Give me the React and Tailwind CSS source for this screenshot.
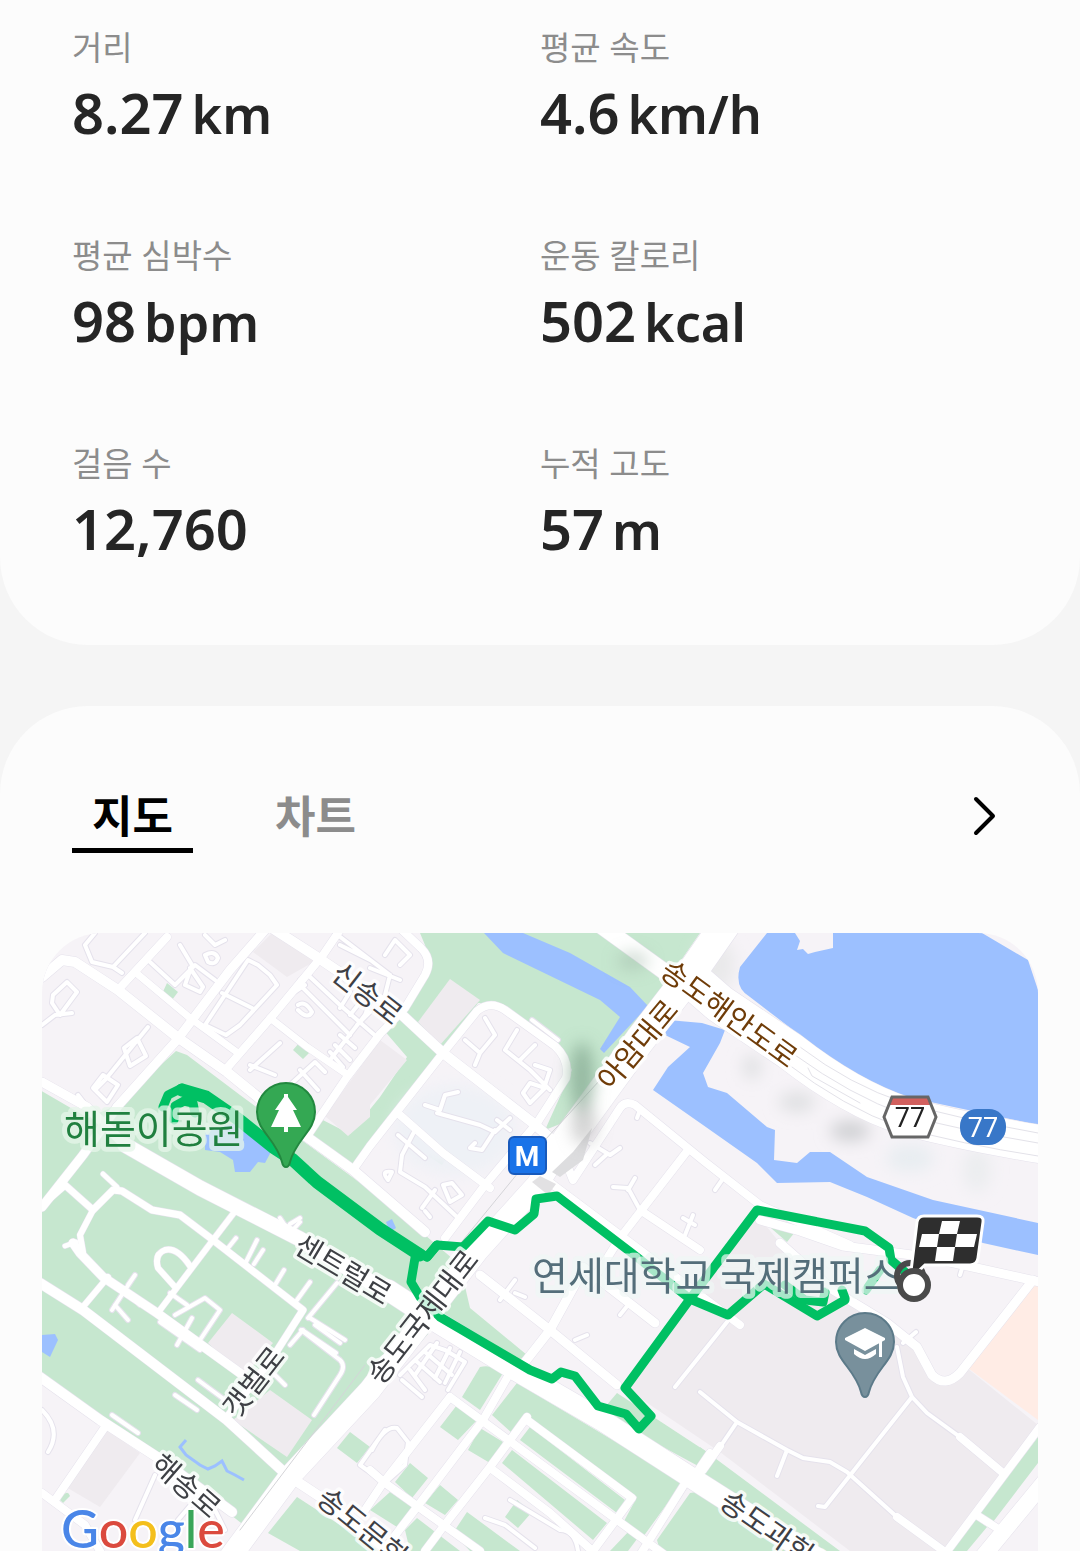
const stats = [
  { label: "거리", value: "8.27", unit: "km" },
  { label: "평균 속도", value: "4.6", unit: "km/h" },
  { label: "평균 심박수", value: "98", unit: "bpm" },
  { label: "운동 칼로리", value: "502", unit: "kcal" },
  { label: "걸음 수", value: "12,760" },
  { label: "누적 고도", value: "57", unit: "m" },
];

// parks and lawns
const greens = [
  "M40 1090L88 1118L117 1105L176 1051L187 1055L240 1095L370 1190L425 1235L460 1265L470 1308L527 1355L512 1364L440 1320L380 1390L288 1474L250 1530L156 1456L40 1378Z",
  "M317 1117L350 1134L380 1097L407 1057L382 1028L400 1010L432 962L420 933H700L664 985L600 1070L570 1120L545 1130L572 1070L560 1045L500 1003L478 1003L443 1053L352 1166L310 1134Z",
  "M161 996L167 983L178 992L172 1000Z M293 1050L299 1043L310 1052L303 1059Z M428 1156L435 1147L447 1157L442 1165Z",
  "M617 1393L707 1452L700 1467L600 1413Z",
  "M700 1447L840 1551H810L703 1473Z M700 1487L810 1551H700Z",
  "M1038 1437L980 1513L993 1522L1038 1463Z M973 1517L987 1527L967 1551H950Z",
  "M480 1367Q492 1364 503 1373L480 1410L462 1397Z",
  "M517 1383L683 1482L643 1537L623 1523L637 1497L527 1417L512 1433L492 1415Z",
  "M530 1427L625 1500L617 1513L520 1440Z M512 1450L607 1523L593 1540L502 1463Z",
  "M457 1405L477 1420L458 1440L440 1427Z M480 1428L503 1442L490 1463L468 1450Z",
  "M410 1463L428 1478L412 1498L395 1482Z M440 1485L458 1500L445 1515L425 1503Z",
  "M390 1492L412 1507L397 1527L370 1510Z M417 1518L460 1551H410L405 1530Z M467 1512L520 1551H470L453 1533Z",
  "M517 1500L532 1512L518 1528L505 1517Z M630 1530L640 1535L628 1551H610Z M710 1490L690 1493L657 1540L660 1551H710Z",
  "M350 1432L370 1447L357 1463L337 1448Z M297 1497L380 1551H300L268 1533Z",
  "M60 1500Q67 1488 70 1496L63 1503Z",
];

// campus and building plots
const plots = [
  "M757 1215L690 1300L625 1388L720 1452L850 1551H945L1038 1425L967 1368L947 1382L933 1376L917 1347L833 1290L780 1243Z",
  "M232 1313L273 1343L243 1377L208 1343Z M270 1390L312 1420L287 1457L233 1420Z",
  "M107 1430L140 1453L100 1507L66 1487Z",
  "M253 952L272 933L317 960L287 977Z M380 1040L407 1060L370 1105V1117L348 1136L325 1116Z",
  "M450 979L480 1000L440 1045L418 1022Z",
];

const water = [
  "M484 933H523L570 953L630 987L648 1006L604 1053L600 1049L620 1017L600 1000L503 953Z",
  "M767 933L740 967Q734 988 750 997L810 1043Q850 1079 907 1097L1038 1125V990L1028 960L982 933H833L833 948L815 952L808 954L803 949L797 950L800 941L795 933Z",
  "M668 1020L702 1023L725 1030L720 1043L703 1073L708 1087L727 1093L767 1127L775 1130L774 1160L797 1163L810 1152H830L867 1177L933 1200L1038 1223V1255L983 1243L913 1218L867 1197L830 1182L777 1183L757 1163L703 1125L653 1090L668 1067L690 1047L665 1035Z",
  "M205 1132L245 1120L273 1148L265 1163L258 1162L250 1172H235L233 1160L220 1152L205 1150Z",
  "M42 1335L55 1334L58 1340L50 1357L42 1352Z",
  "M386 1222L392 1219L396 1228L390 1232Z",
];

const avenues = [
  // coastal road
  { w: 38, d: "M690 978L720 1004L790 1051Q850 1098 905 1116Q960 1131 1045 1145" },
  { w: 30, d: "M725 925L690 975L640 1040L600 1095L560 1150" },
  { w: 22, d: "M560 1148L537 1185L478 1250L370 1390L290 1476L228 1560" },
  { w: 16, d: "M600 925L665 972L690 990" },
  { w: 21, d: "M388 1290L437 1322L517 1371L603 1421L690 1477L820 1560" },
  { w: 15, d: "M125 1145L200 1188L300 1239L392 1295" },
  { w: 16, d: "M1050 1475L980 1560" },
];

const streets = [
  { w: 10, d: "M42 977L62 960L75 962L118 990L177 1037L227 1072L307 1137L353 1170L425 1232" },
  { w: 10, d: "M272 928L317 957L400 1013L443 1053L533 1123L557 1144" },
  { w: 9, d: "M42 1082L87 1107L125 1145" },
  { w: 8, d: "M118 990L167 937 M227 1068L275 1013L323 955L340 930" },
  { w: 9, d: "M117 1107L177 1040L230 970L265 930" },
  { w: 9, d: "M117 1107L83 1155L42 1207" },
  { w: 8, d: "M310 1132L347 1077L380 1034L405 1008L425 975Q433 960 421 948L402 930" },
  { w: 8, d: "M353 1170L370 1146L443 1053L477 1011Q490 1000 505 1010L555 1046Q570 1060 566 1078L537 1123" },
  { w: 7, d: "M135 972L190 1018L238 1053 M270 1018L307 1047L345 1073" },
  { w: 8, d: "M400 1115L443 1153L490 1188 M537 1123L485 1185L445 1238" },
  { w: 8, d: "M557 1140L573 1180L620 1108Q625 1100 635 1105L705 1162L760 1205L850 1245" },
  { w: 8, d: "M540 1175L640 1250L740 1325 M688 1150L620 1238L590 1285 M643 1212L700 1250" },
  { w: 9, d: "M480 1275L550 1330L617 1385 M583 1270L550 1330L525 1362 M583 1267L655 1323" },
  { w: 9, d: "M760 1220L800 1231L843 1246L927 1257L1040 1282" },
  { w: 9, d: "M780 1243L833 1290L887 1323L917 1347L932 1375Q945 1388 960 1373L1033 1280" },
  { w: 8, d: "M1040 1427L945 1554 M897 1517L945 1552 M960 1437L1003 1473 M703 1470L720 1446 M975 1514L997 1528" },
  { w: 10, d: "M40 1283L83 1310L227 1420L287 1475L325 1500L400 1560" },
  { w: 9, d: "M73 1243L80 1253L103 1277L157 1313L240 1373" },
  { w: 10, d: "M40 1377L100 1420L157 1457L232 1512" },
  { w: 7, d: "M42 1205L65 1185L93 1210L113 1190L122 1191L152 1210L180 1215L213 1240L303 1310L273 1357L227 1417" },
  { w: 6, d: "M93 1210L80 1235L83 1252 M236 1210L213 1240L160 1310 M108 1277L82 1308" },
  { w: 5, d: "M103 1174L117 1187 M65 1246L76 1242" },
  { w: 6, d: "M175 1287L158 1268Q154 1254 165 1250Q177 1247 190 1266" },
  { w: 8, d: "M105 1427L55 1500 M42 1493L85 1525L100 1551" },
  { w: 8, d: "M370 1470L385 1483L480 1551 M450 1397L617 1520L665 1555" },
  { w: 8, d: "M507 1378L483 1420L417 1507L380 1555 M450 1397L383 1483L365 1510" },
  { w: 8, d: "M527 1417L490 1467L443 1527L425 1551 M493 1470L550 1513L597 1555 M527 1420L632 1498L590 1555" },
  { w: 8, d: "M687 1480L640 1555 M710 1453L695 1475" },
];

const lanes = [
  "M85 945L95 933 M85 945L92 962L113 967L145 933 M113 967L122 973",
  "M150 962L175 985L195 965L215 980 M180 945L192 965L185 985L200 992L203 987L190 968 M205 935L215 945L225 940 M205 955Q215 950 218 958Q215 966 208 962Z",
  "M53 995L67 982L77 992L60 1015L52 1003Z M42 1025L55 1015L72 1013",
  "M148 1027L105 1080L95 1090 M124 1048L137 1038L146 1056L130 1066Z M93 1088L103 1075L118 1085L107 1102Z M78 1095L88 1108",
  "M205 1025L248 960L258 965L270 975L277 985L240 1025L226 1035Z M222 993L252 1008",
  "M300 980L308 975L340 1005L378 1038 M300 985L350 1035 M298 1005Q305 1000 312 1012Q308 1020 298 1010 M290 995L305 985",
  "M330 1060L365 1015L374 992 M340 1008L350 992 M350 1015L362 1000 M357 1025L370 1012 M340 1035L355 1048 M335 1045L350 1060 M330 1052L343 1067",
  "M250 1070L280 1043 M250 1065L275 1075 M290 1085L315 1062L325 1072 M300 1070L318 1090 M340 945L370 960 M335 933L390 975 M370 968L400 980 M385 955L395 940L410 955L400 965 M390 975L385 995",
  "M465 1040L480 1053L475 1065 M480 1053L495 1035L485 1018 M505 1050L530 1070L550 1090 M505 1050L517 1030 M520 1060L535 1045 M535 1065L550 1070L545 1085 M530 1083L545 1088L530 1103L523 1093Z M532 1020L558 1040",
  "M425 1105L440 1110L445 1095L458 1092 M437 1113L455 1118L480 1125L495 1132L510 1118 M495 1130L482 1150L470 1148L475 1143 M497 1120L510 1130",
  "M398 1135L425 1158 M415 1130L402 1155L400 1172L425 1187L457 1217 M388 1180Q380 1170 392 1172Z M452 1183L462 1195L450 1202L443 1185Z M422 1208L435 1190 M425 1211L430 1217",
  "M590 1143L610 1155L620 1148 M606 1155L595 1165 M613 1187L628 1188L640 1210 M635 1178L628 1190 M685 1235L693 1215 M683 1218L695 1225 M715 1190L722 1180 M640 1110L637 1118",
  "M700 1392L737 1422L787 1450L803 1458L830 1462L847 1472L897 1517 M912 1397L825 1507L818 1506 M897 1347L903 1377L912 1397L927 1413L960 1437 M737 1422L720 1447 M727 1322L675 1387 M787 1450L777 1476 M903 1343L916 1332 M960 1275L963 1265",
  "M112 1310L125 1290L140 1305 M125 1290L135 1275L128 1285 M115 1305L128 1320 M170 1293L187 1305 M175 1315L205 1298L220 1310L200 1340 M192 1318L177 1345 M160 1322L200 1350 M198 1380L225 1400 M175 1395L197 1410 M112 1415L138 1433",
  "M228 1248L236 1238 M246 1262L257 1240 M254 1264L263 1250 M275 1285L284 1270 M297 1300L310 1282 M337 1283L308 1318 M290 1224L300 1218 M301 1330L340 1360Q346 1366 340 1375L314 1415 M302 1330L336 1353 M310 1318L345 1340 M315 1325L340 1343 M290 1345L303 1330 M285 1385L275 1375",
  "M400 1375L430 1345L445 1350L465 1362L448 1390 M410 1370L425 1390 M415 1360L440 1382 M425 1352L452 1375 M437 1343L415 1375 M450 1348L435 1378 M460 1352L445 1383 M402 1380L422 1397",
  "M372 1450Q385 1425 397 1428L408 1442L405 1465L385 1483 M360 1465L385 1430 M360 1465L395 1490",
  "M510 1500L560 1530Q575 1530 578 1551 M485 1518L505 1525L535 1548 M500 1300L515 1280 M515 1293L525 1297 M575 1340L587 1335 M620 1315L628 1305 M135 1520L155 1475 M178 1520L195 1500 M215 1510L225 1530",
  "M280 1218L290 1233L300 1222 M42 1410Q62 1430 48 1452",
];

const allRoads = [...streets, ...avenues];

const halo = "[paint-order:stroke] [stroke-linejoin:round]";

const roadLabels = [
  { text: "신송로", x: 367, y: 994, rotate: 38 },
  { text: "센트럴로", x: 343, y: 1270, rotate: 31 },
  { text: "갯벌로", x: 254, y: 1382, rotate: -52 },
  { text: "해송로", x: 186, y: 1486, rotate: 41 },
  { text: "송도국제대로", x: 423, y: 1317, rotate: -52 },
  { text: "송도문화로", x: 373, y: 1536, rotate: 39 },
  { text: "송도과학로", x: 778, y: 1536, rotate: 35 },
  { text: "아암대로", x: 638, y: 1045, rotate: -50, brown: true },
  { text: "송도해안도로", x: 729, y: 1014, rotate: 36, brown: true },
];

const pin =
  "M-29 0A29 29 0 1 1 29 0C29 19 10 27 4 50Q3 55 0 55Q-3 55 -4 50C-10 27 -29 19 -29 0Z";

function RouteMap() {
  return (
    <svg viewBox="42 933 996 618" className="block w-full" role="img" aria-label="지도">
      <defs>
        <filter id="soft" x="-50%" y="-50%" width="200%" height="200%">
          <feGaussianBlur stdDeviation="8" />
        </filter>
      </defs>
      <rect x="42" y="933" width="996" height="618" fill="#f6f3f7" />

      {greens.map((d) => (
        <path key={d} d={d} fill="#c6e7cf" />
      ))}
      {plots.map((d) => (
        <path key={d} d={d} fill="#efebef" />
      ))}
      <path d="M1038 1285L1030 1288L968 1368L1038 1420Z" fill="#ffece5" />
      <path d="M757 1216L768 1217L795 1232L787 1242Z" fill="#c6e7cf" />

      <g filter="url(#soft)" fill="#dfe0e2">
        <ellipse cx="797" cy="1102" rx="18" ry="10" />
        <ellipse cx="850" cy="1131" rx="20" ry="10" fill="#cfd0d3" />
        <ellipse cx="910" cy="1158" rx="24" ry="14" fill="#e8edf1" />
        <ellipse cx="977" cy="1170" rx="14" ry="22" fill="#ebedef" />
        <ellipse cx="752" cy="1067" rx="9" ry="12" />
        <ellipse cx="715" cy="965" rx="20" ry="26" fill="#e9e9ea" />
        <ellipse cx="455" cy="1130" rx="60" ry="45" fill="#eef1f6" />
      </g>

      {water.map((d) => (
        <path key={d} d={d} fill="#9cc0ff" />
      ))}
      <path
        d="M186 1440L180 1447L186 1455L200 1465L208 1469L215 1466L222 1461L227 1471L235 1475L244 1480"
        fill="none"
        stroke="#9cc0ff"
        strokeWidth="3"
      />

      <g fill="none" strokeLinecap="round" strokeLinejoin="round">
        <g stroke="#e5e2ec">
          {lanes.map((d) => (
            <path key={d} d={d} strokeWidth="6" />
          ))}
          {allRoads.map(({ w, d }) => (
            <path key={d} d={d} strokeWidth={w + 1} />
          ))}
        </g>
        <g stroke="#fff">
          {lanes.map((d) => (
            <path key={d} d={d} strokeWidth="4" />
          ))}
          {allRoads.map(({ w, d }) => (
            <path key={d} d={d} strokeWidth={w} />
          ))}
        </g>
        <g stroke="#e3e2e9" strokeWidth="1">
          <path d="M800 1047Q850 1085 905 1103Q960 1119 1038 1133" />
          <path d="M795 1055Q850 1095 905 1115Q960 1130 1038 1143" />
          <path d="M785 1062Q845 1108 900 1127Q960 1144 1038 1156" />
          <path d="M808 1068L812 1076L860 1103" />
          <path d="M600 1080L545 1140L455 1250 M365 1365L240 1530" stroke="#d4d4d8" />
        </g>
      </g>
      <path d="M573 1152L592 1128L583 1160L560 1177L552 1172Z" fill="#dddddf" />
      <path d="M540 1176L556 1184L548 1195L532 1182Z" fill="#e2e1e3" />
      <g filter="url(#soft)">
        <ellipse cx="582" cy="1078" rx="12" ry="36" fill="#7fa48c" opacity="0.7" />
        <ellipse cx="584" cy="1125" rx="13" ry="20" fill="#aaa" opacity="0.5" />
        <ellipse cx="633" cy="961" rx="16" ry="9" fill="#9fb8a8" opacity="0.5" />
      </g>

      {/* walked route */}
      <g fill="none" stroke="#00c063" strokeWidth="9" strokeLinejoin="round" strokeLinecap="round">
        <path
          d="M182 1090L206 1097L238 1119L273 1147L293 1160L317 1182L380 1229L420 1255"
          strokeWidth="13"
        />
        <path d="M163 1107L168 1095L182 1088 M418 1252L427 1257L437 1245" />
        <path d="M427 1257L437 1245L463 1247L488 1221L515 1230L534 1214L536 1199L557 1196L633 1254L690 1299L728 1315L764 1284L817 1316L845 1300" />
        <path d="M415 1258L411 1282L420 1297L440 1317L530 1370L552 1379L561 1372L575 1376L598 1406L626 1414L639 1429L651 1416L625 1388L690 1299L757 1210L865 1231L889 1248L891 1260L905 1272" />
        <path d="M174 1120L175 1106L184 1101L193 1103L195 1113" />
        <path d="M785 1285L805 1300L823 1302L825 1292 M845 1298L842 1290 M866 1290L880 1270" />
      </g>

      {/* place labels */}
      <g
        fontSize="39"
        strokeWidth="10"
        className={`${halo} font-['Noto_Sans_CJK_KR',sans-serif]`}
      >
        <text x="64" y="1143" fill="#20803f" stroke="#e6f5e9" strokeOpacity="0.75">
          해돋이공원
        </text>
        <text x="532" y="1290" fill="#546e7a" stroke="#f0f6f5" strokeOpacity="0.7">
          연세대학교 국제캠퍼스
        </text>
      </g>
      <g
        fontSize="29"
        strokeWidth="7"
        textAnchor="middle"
        className={`${halo} font-['Noto_Sans_CJK_KR',sans-serif]`}
      >
        {roadLabels.map(({ text, x, y, rotate, brown }) => (
          <text
            key={text}
            transform={`translate(${x} ${y}) rotate(${rotate})`}
            y="10"
            fill={brown ? "#6f3c08" : "#3e4045"}
            stroke="#fff"
            strokeOpacity="0.8"
          >
            {text}
          </text>
        ))}
      </g>

      {/* metro stop */}
      <rect x="509" y="1137" width="37" height="37" rx="5" fill="#1a73e8" stroke="#185abc" strokeWidth="2" />
      <text x="527" y="1166" fontSize="28" textAnchor="middle" fill="#fff" className="font-['Roboto',sans-serif] font-bold">
        M
      </text>

      {/* route shields */}
      <path d="M892 1097H928L936 1117L928 1137H892L884 1117Z" fill="#fff" />
      <path d="M892 1098H928L931 1105H889Z" fill="#d2605e" />
      <path d="M892 1097H928L936 1117L928 1137H892L884 1117Z" fill="none" stroke="#666" strokeWidth="3" />
      <rect x="960" y="1109" width="46" height="36" rx="17" fill="#3877c8" />
      <g fontSize="27" textAnchor="middle" className="font-['Roboto',sans-serif]">
        <text x="910" y="1127" fill="#222">77</text>
        <text x="983" y="1137" fill="#fff">77</text>
      </g>

      {/* park */}
      <g transform="translate(286 1112)">
        <path d={pin} fill="#34a853" stroke="#22883f" strokeWidth="2" />
        <path d="M-2 -18H2V-15L11 -2H7L15 15H2V20H-2V15H-15L-7 -2H-11L-2 -15Z" fill="#fff" />
      </g>
      {/* university */}
      <g transform="translate(865 1342)">
        <path d={pin} fill="#78909c" stroke="#5c7a89" strokeWidth="2" />
        <path d="M0 -14L20 -4V-2L0 9L-20 -2V-4Z M14 0L17 -2V15H14Z" fill="#fff" />
        <path d="M-11 7L0 13L11 7V12Q0 22 -11 12Z" fill="#fff" />
      </g>

      {/* start and finish */}
      <circle cx="910" cy="1276" r="13" fill="none" stroke="#4a4a4a" strokeWidth="6" />
      <path
        d="M924 1216H977Q984 1216 983 1222L978 1258Q977 1265 970 1265H925L910 1279L917 1222Q918 1216 924 1216Z"
        fill="#2e2e2e"
        stroke="#fff"
        strokeWidth="3"
      />
      <path
        d="M942 1221H960L957 1234H939Z M922 1234H939L937 1247H919Z M957 1234H977L974 1247H955Z M937 1247H955L953 1261H935Z"
        fill="#fff"
      />
      <circle cx="914" cy="1285" r="14" fill="#fff" stroke="#4a4a4a" strokeWidth="6" />

      <text
        x="61"
        y="1548"
        fontSize="52"
        stroke="#fff"
        strokeWidth="4"
        className={`${halo} font-['Lato',sans-serif] font-medium`}
      >
        <tspan fill="#4a86e8">G</tspan>
        <tspan fill="#db4a3e">o</tspan>
        <tspan fill="#f4bf1c">o</tspan>
        <tspan fill="#4a86e8">g</tspan>
        <tspan fill="#3aa65a">l</tspan>
        <tspan fill="#db4a3e">e</tspan>
      </text>
    </svg>
  );
}

const App = () => {
  return (
    <div className="bg-[#f5f5f5] font-['Noto_Sans','Noto_Sans_CJK_KR',sans-serif]">
      <section className="rounded-b-[88px] bg-[#fcfcfc] px-18 pt-6 pb-[77px]">
        <dl className="grid grid-cols-2 gap-y-20">
          {stats.map(({ label, value, unit }) => (
            <div key={label}>
              <dt className="text-[33px] leading-12 text-[#8c8c8c]">{label}</dt>
              <dd className="flex items-baseline gap-2 text-[56px] leading-20 font-semibold text-[#252525]">
                <span>{value}</span>
                {unit && <span className="text-[52px] leading-none">{unit}</span>}
              </dd>
            </div>
          ))}
        </dl>
      </section>

      <section className="mt-[61px] rounded-t-[88px] bg-[#fcfcfc] pt-[78px]">
        <div className="flex items-start justify-between px-18">
          <div role="tablist" className="flex gap-[62px] text-[44px] leading-16 font-bold">
            <button role="tab" aria-selected="true" className="border-b-5 border-black px-5 text-black">
              지도
            </button>
            <button role="tab" aria-selected="false" className="border-b-5 border-transparent px-5 text-[#8c8c8c]">
              차트
            </button>
          </div>
          <button aria-label="더보기" className="px-2 pt-2">
            <svg width="32" height="48" viewBox="0 0 32 48" fill="none" stroke="#000" strokeWidth="4">
              <path d="M8 7L25 24L8 41" strokeLinecap="round" strokeLinejoin="round" />
            </svg>
          </button>
        </div>
        <div className="mt-20 px-[42px]">
          <div className="overflow-hidden rounded-t-[60px]">
            <RouteMap />
          </div>
        </div>
      </section>
    </div>
  );
};

export default App;
